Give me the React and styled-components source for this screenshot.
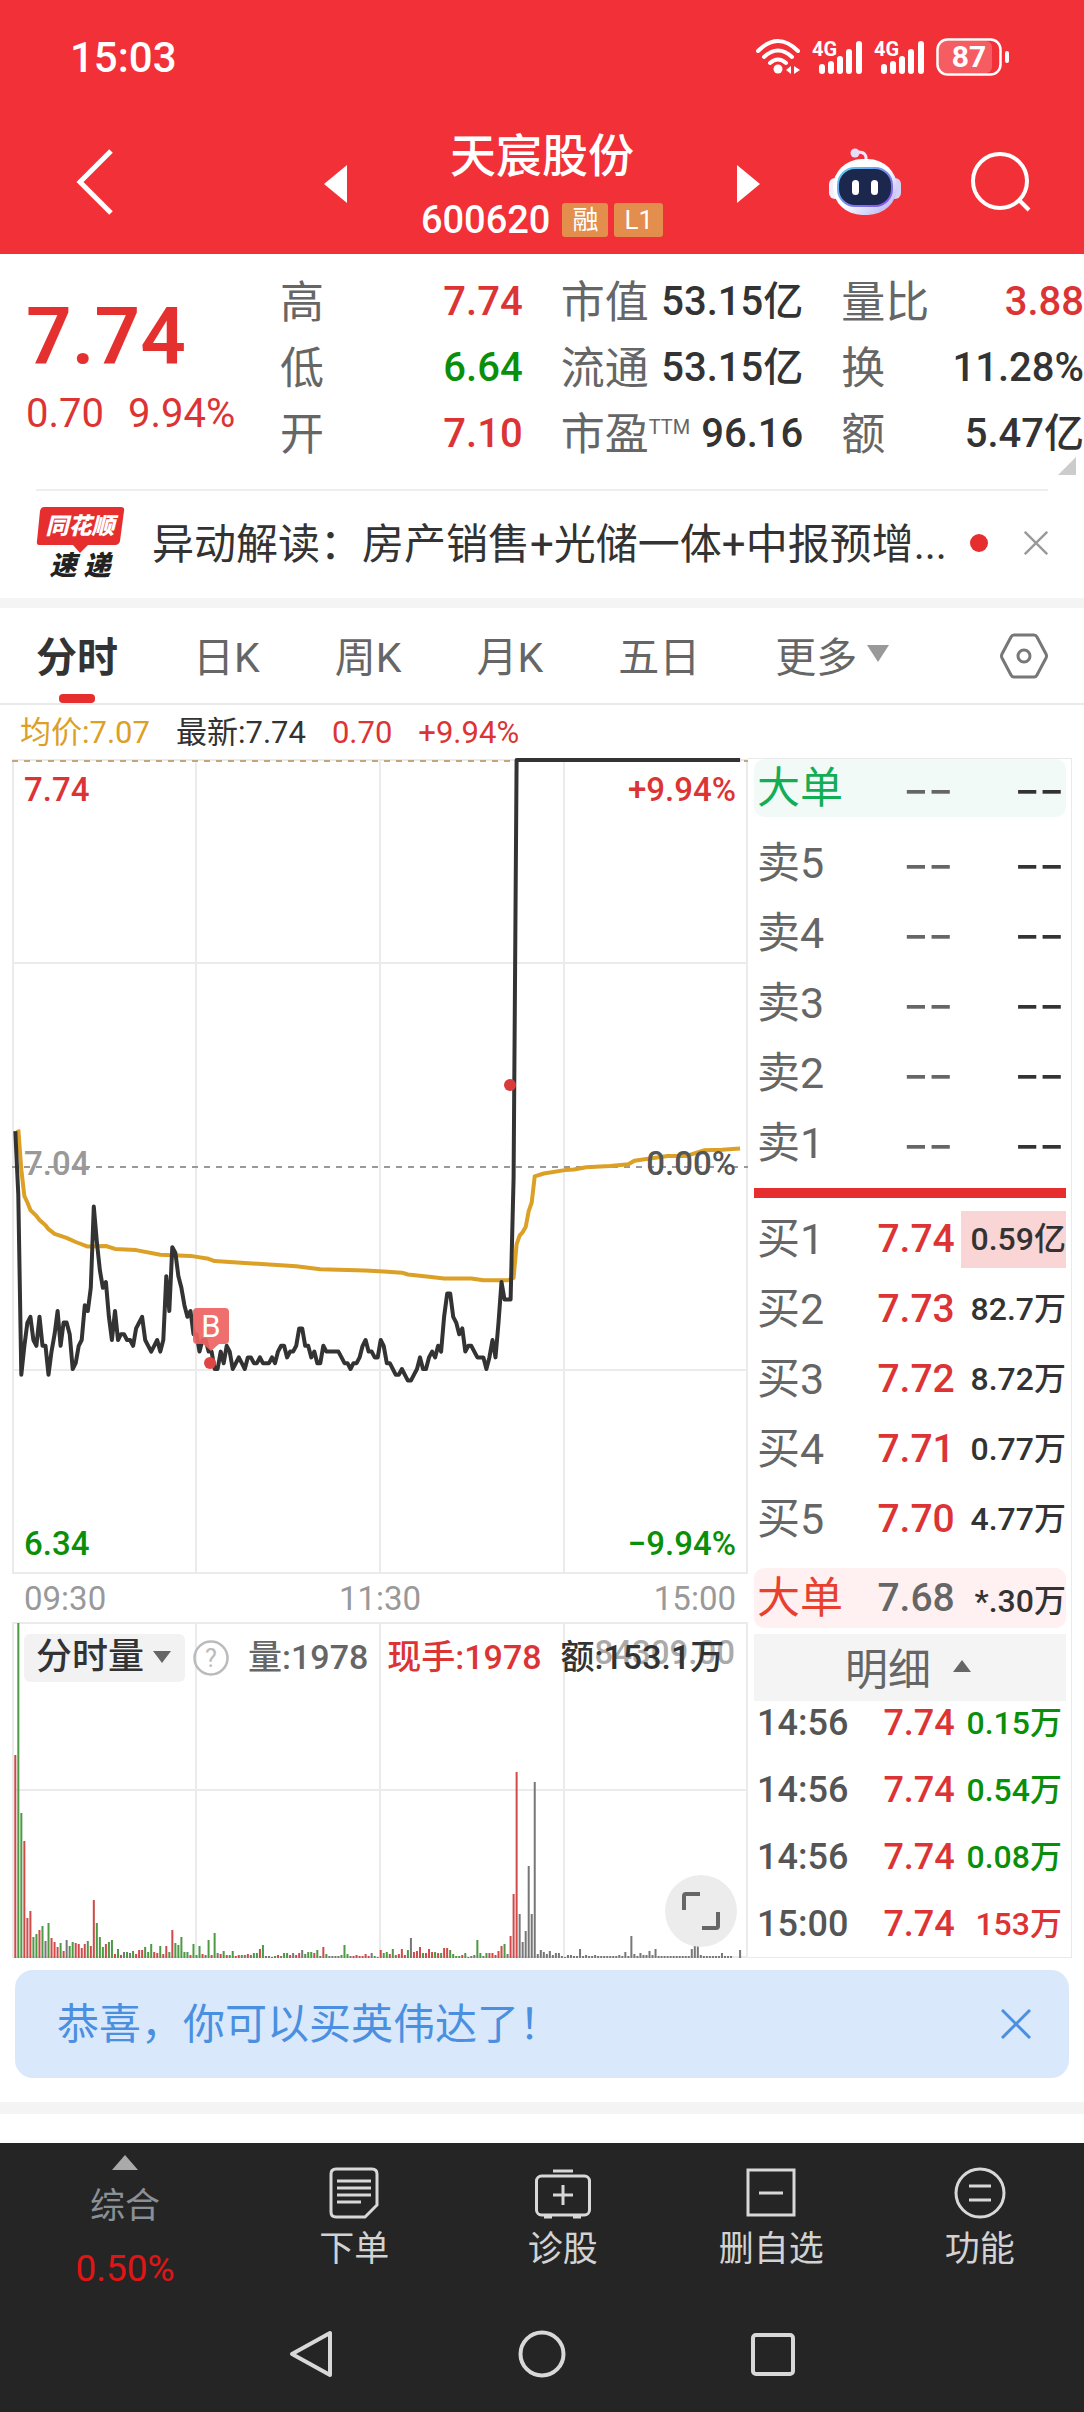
import React, { useState } from "react";
import styled, { createGlobalStyle } from "styled-components";

const GlobalStyle = createGlobalStyle`
  * {
    box-sizing: border-box;
  }
  body {
    margin: 0;
    background: #fff;
    color: #333;
    font-family: Roboto, "Noto Sans CJK SC", sans-serif;
  }
  button {
    display: flex;
    align-items: center;
    justify-content: center;
    padding: 0;
    border: 0;
    background: none;
    color: inherit;
    font: inherit;
    cursor: pointer;
  }
  svg {
    display: block;
    flex: none;
  }
  h1, p, dl, dd {
    margin: 0;
  }
`;

const RED = "#dc3434";
const GREEN = "#0a8f0a";
const colors = { up: RED, down: GREEN, dark: "#333", grey: "#666" };

/* ---------- data ---------- */

const stats = [
    [["高", "7.74", "up"], ["低", "6.64", "down"], ["开", "7.10", "up"]],
    [["市值", "53.15亿", "dark"], ["流通", "53.15亿", "dark"], ["市盈", "96.16", "dark", "TTM"]],
    [["量比", "3.88", "up"], ["换", "11.28%", "dark"], ["额", "5.47亿", "dark"]],
];

const tabs = ["分时", "日K", "周K", "月K", "五日"];

const asks = ["卖5", "卖4", "卖3", "卖2", "卖1"];

const bids = [
    ["买1", "7.74", "0.59亿"],
    ["买2", "7.73", "82.7万"],
    ["买3", "7.72", "8.72万"],
    ["买4", "7.71", "0.77万"],
    ["买5", "7.70", "4.77万"],
];

const ticks = [
    ["14:56", "7.74", "0.15万", "down"],
    ["14:56", "7.74", "0.54万", "down"],
    ["14:56", "7.74", "0.08万", "down"],
    ["15:00", "7.74", "153万", "up"],
];

// price per minute, in cents
const prices = [
    710, 699, 668, 673, 677, 678, 674, 673, 678, 673, 673, 668, 672, 675, 679, 673, 677, 677, 675, 669,
    670, 673, 674, 680, 679, 683, 697, 691, 686, 683, 684, 678, 674, 679, 674, 675, 675, 674, 674, 673,
    676, 677, 678, 674, 673, 672, 673, 674, 672, 674, 685, 679, 690, 689, 685, 683, 680, 678, 679, 675,
    675, 672, 674, 674, 672, 672, 669, 669, 672, 670, 673, 672, 669, 670, 671, 670, 669, 671, 671, 670,
    670, 671, 670, 670, 670, 671, 670, 672, 673, 673, 671, 672, 672, 673, 676, 676, 673, 673, 671, 672,
    670, 670, 673, 672, 672, 672, 672, 672, 671, 670, 670, 669, 670, 670, 671, 673, 674, 672, 672, 671,
    671, 674, 673, 670, 670, 669, 668, 668, 669, 668, 667, 667, 668, 669, 671, 669, 669, 671, 672, 671,
    673, 672, 678, 682, 682, 678, 677, 675, 676, 672, 673, 673, 672, 671, 671, 671, 669, 671, 674, 671,
    677, 684, 681, 681, 681, 702,
    ...Array(75).fill(774),
];

// [minute, average price]
const average = [
    [1, 710.3], [2, 703.4], [3, 698.8], [4, 697.7], [5, 696.4], [7, 695.4], [8, 694.7], [10, 693.8],
    [11, 693.1], [13, 692.3], [17, 691.6], [20, 690.9], [24, 690.1], [30, 690.2], [33, 689.7], [40, 689.5],
    [48, 688.7], [58, 688.5], [64, 688], [66, 687.6], [76, 687.3], [93, 686.7], [101, 686.2], [116, 686],
    [122, 685.8], [128, 685.6], [130, 685.3], [137, 684.9], [142, 684.6], [151, 684.6], [155, 684.3],
    [163, 684.3], [165, 684.7], [166, 690.5], [167, 692], [168, 692.6], [169, 693.5], [170, 696.2],
    [171, 697.7], [172, 702.2], [175, 702.7], [182, 703.3], [185, 703.4], [189, 703.8], [197, 704],
    [203, 704.3], [205, 704.9], [209, 705.2], [216, 705.7], [222, 705.7], [228, 706.7], [234, 706.8],
    [240, 707],
];

// direction letter + bar height, one per minute
const volumes = `
  r203 g335 g145 r117 r40 r47 g21 g24 r28 g32 k17 g35 r20 r16 r11 g15 r7 k18 g12 g16
  r15 r14 r10 r14 g17 r12 r58 g35 g21 g11 r14 g16 g18 r4 g9 r3 k6 g6 k5 g7
  r4 r8 r8 g11 g6 g14 r6 r5 g12 r4 r12 g6 r28 g15 g13 g21 g6 g6 r3 g14
  g3 g12 r4 k3 g18 r3 g25 k5 r4 g7 r3 g3 g7 r2 r3 g3 k3 r4 k3 g5
  g5 r9 g13 k2 k2 r1 g2 r3 k2 g5 g5 r3 k5 r3 r5 k8 g4 g6 g6 r5
  g8 k2 r11 g4 k2 k2 k2 k2 g3 g13 g4 k2 r2 r3 r2 r2 r4 r2 k5 g2
  k1 r8 g5 g6 r4 g9 k3 r4 r9 r3 g8 k20 r6 r7 r11 g5 r5 r9 r6 g6
  r5 g5 r10 r10 g8 g4 g2 g2 r3 g5 r1 k2 k3 g18 g5 k2 g5 r5 r5 r3
  r7 r12 g14 k4 r22 r64 r186 k44 k16 k27 k92 k44 k176 k4 k8 k6 k4 k7 k3 k5
  k5 k2 k1 k3 k3 k2 k2 k9 k2 k3 k2 k2 k3 k2 k2 k2 k2 k2 k2 k2
  k3 k2 k6 k2 k22 k4 k2 k5 k3 k3 k7 k3 k9 k2 k2 k2 k2 k2 k2 k2
  k2 k2 k2 k2 k9 k12 k12 k3 k2 k2 k2 k2 k2 k2 k5 k2 k2 k2 k0 k0 k8
`.trim().split(/\s+/).map((v) => [v[0], Number(v.slice(1))]);

const barColors = { r: "#d04a4a", g: "#4c9a44", k: "#777" };

const xOf = (minute) => 3.3 + minute * 3.02;
const yOf = (cents) => 408 - (cents - 704) * 5.8;
const toPoints = (list) => list.map(([m, c]) => `${xOf(m).toFixed(1)},${yOf(c).toFixed(1)}`).join(" ");

/* ---------- header ---------- */

const Header = styled.header`
  background: #f23037;
  color: #fff;
`;

const StatusBar = styled.div`
  display: flex;
  align-items: center;
  justify-content: space-between;
  height: 114px;
  padding: 0 74px 0 70px;
  font-size: 42px;
  font-weight: 500;
`;

const StatusIcons = styled.div`
  display: flex;
  align-items: center;
  gap: 12px;
`;

const TitleBar = styled.div`
  display: grid;
  grid-template-columns: minmax(0, 1fr) 436px minmax(0, 1fr);
  height: 140px;
`;

const TitleSide = styled.div`
  display: flex;
  align-items: center;
  justify-content: ${(p) => (p.$end ? "flex-end" : "flex-start")};
  gap: 68px;
  padding: ${(p) => (p.$end ? "0 52px 4px 0" : "0 0 4px 75px")};
`;

const TitleCenter = styled.div`
  display: flex;
  align-items: center;
  justify-content: space-between;
`;

const StockName = styled.div`
  align-self: flex-end;
  text-align: center;
  h1 {
    font-size: 46px;
    font-weight: 500;
    line-height: 65px;
  }
`;

const StockCode = styled.div`
  display: flex;
  align-items: center;
  justify-content: center;
  gap: 6px;
  height: 65px;
  padding-bottom: 4px;
  font-size: 38px;
  font-weight: 500;
`;

const Badge = styled.span`
  padding: 0 10px;
  border-radius: 3px;
  background: #e38e4d;
  font-size: 26px;
  font-weight: 400;
  line-height: 34px;
  &:first-of-type {
    margin-left: 6px;
  }
`;

/* ---------- quote ---------- */

const Quote = styled.section`
  position: relative;
  display: grid;
  grid-template-columns: 242px repeat(3, 1fr);
  column-gap: 38px;
  padding: 16px 0 21px;
`;

const Price = styled.div`
  padding: 25px 0 0 26px;
  color: ${RED};
  white-space: nowrap;
`;

const BigPrice = styled.p`
  color: #e53030;
  font-size: 80px;
  font-weight: 600;
  line-height: 84px;
`;

const Change = styled.p`
  display: flex;
  gap: 24px;
  margin-top: 10px;
  font-size: 40px;
  line-height: 50px;
`;

const Stat = styled.div`
  display: flex;
  align-items: center;
  justify-content: space-between;
  height: 66px;
  font-size: 40px;
  line-height: 66px;
  white-space: nowrap;
  dt {
    color: #666;
    font-size: 44px;
  }
  sup {
    font-size: 20px;
    line-height: 20px;
  }
  dd {
    padding-bottom: 2px;
    color: ${(p) => colors[p.$tone]};
    font-weight: 500;
  }
`;

const Corner = styled.span`
  position: absolute;
  right: 8px;
  bottom: 14px;
  border-bottom: 18px solid #ccc;
  border-left: 18px solid transparent;
`;

const News = styled.section`
  display: flex;
  align-items: center;
  height: 109px;
  margin: 0 36px;
  padding-bottom: 3px;
  border-top: 2px solid #eee;
`;

const NewsLink = styled.a`
  flex: 1;
  margin-left: 26px;
  padding-bottom: 6px;
  overflow: hidden;
  color: #333;
  font-size: 42px;
  text-decoration: none;
  white-space: nowrap;
`;

const Dot = styled.span`
  width: 18px;
  height: 18px;
  margin-right: 36px;
  border-radius: 50%;
  background: #e62e2e;
`;

const Band = styled.div`
  height: ${(p) => p.$size}px;
  background: #f4f4f4;
`;

/* ---------- tabs ---------- */

const Tabs = styled.nav`
  display: flex;
  align-items: stretch;
  gap: 75px;
  height: 97px;
  padding: 0 36px 0 36px;
  border-bottom: 2px solid #e9e9e9;
  font-size: 41px;
`;

const Tab = styled.button`
  && {
    position: relative;
    gap: 10px;
    padding-bottom: 4px;
    color: ${(p) => (p.$active ? "#333" : "#666")};
    font-weight: ${(p) => (p.$active ? 700 : 400)};
    white-space: nowrap;
  }
  &::after {
    content: "";
    display: ${(p) => (p.$active ? "block" : "none")};
    position: absolute;
    bottom: 0;
    left: 50%;
    width: 36px;
    height: 9px;
    margin-left: -18px;
    border-radius: 4px;
    background: #e62e2e;
  }
  &:last-child {
    margin-left: auto;
    padding: 0;
  }
`;

const Caret = styled.span`
  border: ${(p) => p.$size}px solid transparent;
  ${(p) => (p.$up ? "border-top-width: 0;" : "border-bottom-width: 0;")}
  ${(p) => (p.$up ? "border-bottom" : "border-top")}: ${(p) => p.$tall || p.$size}px solid ${(p) => p.$color || "#666"};
`;

/* ---------- chart ---------- */

const Legend = styled.div`
  display: flex;
  align-items: baseline;
  gap: 26px;
  height: 53px;
  padding: 0 20px;
  color: ${RED};
  font-size: 31px;
  line-height: 56px;
`;

const Tone = styled.span`
  color: ${(p) => p.$color};
`;

const Market = styled.section`
  display: grid;
  grid-template-columns: 1fr 324px;
  padding: 0 12px;
`;

const Chart = styled.svg`
  width: 100%;
  height: auto;
  font-size: 33px;
  font-weight: 500;
`;

const Times = styled.div`
  display: flex;
  align-items: center;
  justify-content: space-between;
  height: 48px;
  padding: 0 12px;
  color: #999;
  font-size: 33px;
`;

const Volume = styled.div`
  position: relative;
`;

const VolumeBar = styled.div`
  position: absolute;
  top: 12px;
  left: 12px;
  display: flex;
  align-items: center;
  height: 48px;
  font-size: 34px;
  font-weight: 500;
  line-height: 44px;
  white-space: nowrap;
`;

const VolumeSelect = styled.button`
  && {
    gap: 9px;
    height: 48px;
    margin-right: 8px;
    padding: 0 14px 2px 12px;
    border-radius: 6px;
    background: #f2f2f2;
    font-size: 36px;
  }
`;

const VolumeText = styled.span`
  margin-left: 19px;
  padding-bottom: 2px;
  color: ${(p) => p.$color};
`;

const Expand = styled.button`
  && {
    position: absolute;
    right: 11px;
    bottom: 11px;
    width: 72px;
    height: 72px;
    border-radius: 50%;
    background: #ececec;
  }
`;

/* ---------- order book ---------- */

const Book = styled.aside`
  padding: 0 5px 0 6px;
  border: 1px solid #eaeaea;
  border-left: 0;
`;

const Table = styled.table`
  width: 100%;
  margin-top: ${(p) => p.$top || 0}px;
  border-spacing: 0;
  table-layout: fixed;
  th, td {
    height: ${(p) => p.$row}px;
    padding: 0;
    font-weight: 500;
    text-align: right;
    white-space: nowrap;
  }
  th {
    width: 32%;
    padding-left: 3px;
    color: ${(p) => p.$label || "#666"};
    font-size: 43px;
    font-weight: 400;
    line-height: 50px;
    text-align: left;
  }
  td {
    width: 35%;
    font-size: 32px;
  }
  th + td {
    width: 33%;
    padding-right: 2px;
    color: ${(p) => p.$price || RED};
    font-size: 39px;
  }
`;

const BigOrder = styled(Table)`
  border-radius: 10px;
  background: ${(p) => p.$bg};
`;

const TickTable = styled(Table)`
  th, td, th + td {
    height: auto;
    padding-bottom: 23px;
    font-size: 36px;
    line-height: 44px;
  }
  th {
    color: #555;
    font-weight: 500;
  }
  td:last-child {
    padding-right: 4px;
    font-size: 32px;
  }
  tr:last-child > * {
    padding-bottom: 0;
  }
`;

const TickVolume = styled.td`
  color: ${(p) => colors[p.$tone]};
`;

const Filled = styled.span`
  display: block;
  margin-left: 4px;
  background: ${(p) => (p.$on ? "#f9d5d5" : "transparent")};
  line-height: 57px;
`;

const Dash = styled.span`
  display: block;
  padding: 0 2px 16px 0;
  color: ${(p) => colors[p.$tone]};
  font-family: "Noto Sans CJK SC", sans-serif;
  font-size: 74px;
  font-weight: 300;
  line-height: 42px;
`;

const Split = styled.div`
  height: 10px;
  margin: 10px 0 6px;
  background: #e62e2e;
`;

const Detail = styled.button`
  && {
    gap: 22px;
    width: 100%;
    height: 67px;
    margin-top: 6px;
    padding: 0 4px 4px 0;
    background: #f4f4f4;
    color: #666;
    font-size: 43px;
  }
`;

/* ---------- bottom ---------- */

const Notice = styled.section`
  display: flex;
  align-items: center;
  justify-content: space-between;
  height: 108px;
  margin: 12px 15px 24px;
  padding: 0 38px 0 42px;
  border-radius: 18px;
  background: #d9e8fb;
  color: #4a8fe0;
  font-size: 42px;
  p {
    padding-bottom: 8px;
  }
`;

const Footer = styled.footer`
  margin-top: 29px;
  background: #252525;
  color: #d2d2d2;
`;

const Actions = styled.nav`
  display: grid;
  grid-template-columns: 250px repeat(4, 1fr);
  height: 153px;
  font-size: 35px;
`;

const Action = styled.button`
  && {
    flex-direction: column;
    justify-content: flex-start;
    gap: 6px;
    padding-top: 24px;
    line-height: 50px;
  }
`;

const IndexAction = styled(Action)`
  && {
    gap: 12px;
    padding: 12px 0 0;
    color: #8a9096;
  }
  strong {
    color: #e01515;
    font-size: 37px;
    font-weight: 400;
  }
`;

const SystemBar = styled.nav`
  display: grid;
  grid-template-columns: repeat(3, 1fr);
  height: 116px;
  padding: 0 196px;
`;

/* ---------- icons ---------- */

const WifiIcon = () => (
    <svg width="44" height="36" viewBox="0 0 44 36" fill="none" stroke="#fff" strokeWidth="4" strokeLinecap="round">
        <path d="M2 12Q22 -8 42 12M8 18Q22 5 36 18M14 24Q22 17 30 24" />
        <circle cx="22" cy="30" r="4.5" fill="#fff" stroke="none" />
        <path d="M35 27v8l-5-4zM38 27v8l6-4z" fill="#fff" stroke="none" />
    </svg>
);

const SignalIcon = () => (
    <svg width="50" height="36" viewBox="0 0 50 36" stroke="#fff" strokeWidth="6" strokeLinecap="round">
        <text x="0" y="17" fill="#fff" stroke="none" fontSize="20" fontWeight="700">4G</text>
        <path d="M10 28v4M19 25v7M28 20v12M37 13v19M47 5v27" />
    </svg>
);

const BatteryIcon = () => (
    <svg width="74" height="38" viewBox="0 0 74 38">
        <rect x="3" y="3" width="53" height="32" rx="6" fill="#fff" opacity=".22" />
        <rect x="1.5" y="1.5" width="63" height="35" rx="10" fill="none" stroke="#fff" strokeWidth="2.5" />
        <rect x="69" y="13" width="4" height="12" rx="2" fill="#fff" />
        <text x="33" y="29" fill="#fff" fontSize="30" fontWeight="700" textAnchor="middle">87</text>
    </svg>
);

const BackIcon = () => (
    <svg width="40" height="68" viewBox="0 0 40 68" fill="none" stroke="#fff" strokeWidth="5">
        <path d="M36 3L5 34l31 31" />
    </svg>
);

const RobotIcon = () => (
    <svg width="74" height="68" viewBox="0 0 74 68">
        <defs>
            <linearGradient id="shell" x1="0" y1="0" x2="1" y2="1">
                <stop offset=".5" stopColor="#fff" />
                <stop offset="1" stopColor="#a9a6f0" />
            </linearGradient>
            <linearGradient id="rim" x1="0" y1="0" x2="1" y2="1">
                <stop offset="0" stopColor="#5ed0f0" />
                <stop offset="1" stopColor="#8a4be8" />
            </linearGradient>
        </defs>
        <path d="M38 12Q39 4 30 4" fill="none" stroke="#efe6fb" strokeWidth="3" />
        <circle cx="27" cy="5" r="4.5" fill="#e4defa" />
        <rect x="1" y="30" width="12" height="21" rx="6" fill="#f1effd" />
        <rect x="61" y="30" width="12" height="21" rx="6" fill="#d5d2f7" />
        <rect x="5" y="11" width="64" height="56" rx="29" fill="url(#shell)" />
        <rect x="10" y="20" width="54" height="38" rx="17" fill="#1c274d" stroke="url(#rim)" strokeWidth="2" />
        <rect x="24" y="32" width="7" height="15" rx="3.5" fill="#fff" />
        <rect x="43" y="32" width="7" height="15" rx="3.5" fill="#fff" />
    </svg>
);

const SearchIcon = () => (
    <svg width="62" height="62" viewBox="0 0 62 62" fill="none" stroke="#fff" strokeWidth="4">
        <circle cx="30" cy="30" r="27" />
        <path d="M49 49l10 10" />
    </svg>
);

const CrossIcon = ({ size, width = 3 }) => (
    <svg width={size} height={size} viewBox="0 0 30 30" fill="none" stroke="currentColor" strokeWidth={width}>
        <path d="M1 1l28 28M29 1L1 29" />
    </svg>
);

const BrandLogo = () => (
    <svg width="90" height="80" viewBox="0 0 90 80" fontWeight="900" fontStyle="italic" textAnchor="middle">
        <path d="M8 4h77q4 0 3 4l-4 30q-1 4-5 4H52l-8 8-7-8H4q-4 0-3-4L4 8q1-4 4-4z" fill="#e62e2e" />
        <text x="44" y="31" fill="#fff" fontSize="23">同花顺</text>
        <text x="27" y="72" fill="#222" fontSize="27">速</text>
        <text x="61" y="72" fill="#222" fontSize="27">递</text>
    </svg>
);

const HexIcon = () => (
    <svg width="48" height="46" viewBox="0 0 48 46" fill="none" stroke="#777" strokeWidth="3">
        <path d="M14 2h20q2 0 3 2l9 17q1 2 0 4l-9 17q-1 2-3 2H14q-2 0-3-2L2 25q-1-2 0-4l9-17q1-2 3-2z" />
        <circle cx="24" cy="23" r="6" />
    </svg>
);

const HelpIcon = () => (
    <svg width="36" height="36" viewBox="0 0 36 36">
        <circle cx="18" cy="18" r="16.5" fill="none" stroke="#bbb" strokeWidth="2.5" />
        <text x="18" y="27" fill="#bbb" fontSize="25" fontWeight="400" textAnchor="middle">?</text>
    </svg>
);

const ActionIcon = ({ children }) => (
    <svg width="56" height="52" viewBox="0 0 56 52" fill="none" stroke="#d8d8d8" strokeWidth="3">
        {children}
    </svg>
);

/* ---------- page ---------- */

const PriceChart = () => (
    <Chart viewBox="0 0 736 816">
        <path
            d="M1 2V815M184 2V815M368 2V815M552 2V815M735 2V815M0 2H736M0 205H736M0 612H736M0 815H736"
            stroke="#ebebeb"
            strokeWidth="2"
        />
        <path d="M0 3H736" stroke="#c4a67c" strokeWidth="2" strokeDasharray="6 6" />
        <path d="M0 409H736" stroke="#999" strokeWidth="2" strokeDasharray="6 6" />
        <polyline points={toPoints(average)} fill="none" stroke="#dba025" strokeWidth="4" strokeLinejoin="round" />
        <polyline
            points={toPoints(prices.map((c, m) => [m, c]))}
            fill="none"
            stroke="#333"
            strokeWidth="4"
            strokeLinejoin="round"
        />
        <circle cx="498" cy="327" r="6" fill="#d93a3a" />
        <g fill={RED}>
            <text x="12" y="43">7.74</text>
            <text x="724" y="43" textAnchor="end">+9.94%</text>
        </g>
        <text x="12" y="417" fill="#999">7.04</text>
        <text x="724" y="417" fill="#555" textAnchor="end">0.00%</text>
        <g fill={GREEN}>
            <text x="12" y="797">6.34</text>
            <text x="724" y="797" textAnchor="end">−9.94%</text>
        </g>
        <path d="M185 550h28q4 0 4 4v28q0 4-4 4h-6l-8 7-8-7h-6q-4 0-4-4v-28q0-4 4-4z" fill="#ee6262" opacity=".92" />
        <text x="199" y="579" fill="#fff" fontSize="31" fontWeight="400" textAnchor="middle">B</text>
        <circle cx="198" cy="605" r="6" fill="#e04444" />
    </Chart>
);

const VolumeChart = () => (
    <Chart viewBox="0 0 736 336">
        <path
            d="M1 1V335M184 1V335M368 1V335M552 1V335M735 1V335M0 1H736M0 168H736M0 335H736"
            stroke="#ebebeb"
            strokeWidth="2"
        />
        {volumes.map(([dir, h], m) => (
            <rect key={m} x={xOf(m) - 1} y={336 - h} width="2" height={h} fill={barColors[dir]} />
        ))}
        <text x="723" y="42" fill="#aaa" textAnchor="end">84309.00</text>
    </Chart>
);

const OrderBook = () => (
    <Book>
        <BigOrder $row={58} $bg="#f1faf6" $label="#13ad56">
            <tbody>
                <tr>
                    <th scope="row">大单</th>
                    <td><Dash $tone="grey">--</Dash></td>
                    <td><Dash $tone="dark">--</Dash></td>
                </tr>
            </tbody>
        </BigOrder>
        <Table $row={70} $top={11}>
            <tbody>
                {asks.map((label) => (
                    <tr key={label}>
                        <th scope="row">{label}</th>
                        <td><Dash $tone="grey">--</Dash></td>
                        <td><Dash $tone="dark">--</Dash></td>
                    </tr>
                ))}
            </tbody>
        </Table>
        <Split />
        <Table $row={70}>
            <tbody>
                {bids.map(([label, price, volume], i) => (
                    <tr key={label}>
                        <th scope="row">{label}</th>
                        <td>{price}</td>
                        <td><Filled $on={i === 0}>{volume}</Filled></td>
                    </tr>
                ))}
            </tbody>
        </Table>
        <BigOrder $row={60} $top={14} $bg="#fff1f1" $label="#e8402f" $price="#666">
            <tbody>
                <tr>
                    <th scope="row">大单</th>
                    <td>7.68</td>
                    <td>*.30万</td>
                </tr>
            </tbody>
        </BigOrder>
        <Detail>
            明细
            <Caret $up $size={9} $tall={12} />
        </Detail>
        <TickTable>
            <tbody>
                {ticks.map(([time, price, volume, tone], i) => (
                    <tr key={i}>
                        <th scope="row">{time}</th>
                        <td>{price}</td>
                        <TickVolume $tone={tone}>{volume}</TickVolume>
                    </tr>
                ))}
            </tbody>
        </TickTable>
    </Book>
);

const App = () => {
    const [active, setActive] = useState("分时");

    return <div lang="zh-CN">
        <GlobalStyle />
        <Header>
            <StatusBar>
                <span>15:03</span>
                <StatusIcons>
                    <WifiIcon />
                    <SignalIcon />
                    <SignalIcon />
                    <BatteryIcon />
                </StatusIcons>
            </StatusBar>
            <TitleBar>
                <TitleSide>
                    <button aria-label="返回"><BackIcon /></button>
                </TitleSide>
                <TitleCenter>
                    <button aria-label="上一只">
                        <svg width="23" height="38" viewBox="0 0 23 38" fill="#fff"><path d="M23 0v38L0 19z" /></svg>
                    </button>
                    <StockName>
                        <h1>天宸股份</h1>
                        <StockCode>
                            600620
                            <Badge>融</Badge>
                            <Badge>L1</Badge>
                        </StockCode>
                    </StockName>
                    <button aria-label="下一只">
                        <svg width="23" height="38" viewBox="0 0 23 38" fill="#fff"><path d="M0 0v38l23-19z" /></svg>
                    </button>
                </TitleCenter>
                <TitleSide $end>
                    <button aria-label="助手"><RobotIcon /></button>
                    <button aria-label="搜索"><SearchIcon /></button>
                </TitleSide>
            </TitleBar>
        </Header>

        <Quote>
            <Price>
                <BigPrice>7.74</BigPrice>
                <Change>
                    <span>0.70</span>
                    <span>9.94%</span>
                </Change>
            </Price>
            {stats.map((column, i) => (
                <dl key={i}>
                    {column.map(([label, value, tone, sup]) => (
                        <Stat key={label} $tone={tone}>
                            <dt>{label}{sup && <sup>{sup}</sup>}</dt>
                            <dd>{value}</dd>
                        </Stat>
                    ))}
                </dl>
            ))}
            <Corner />
        </Quote>

        <News>
            <BrandLogo />
            <NewsLink href="#news">异动解读：房产销售+光储一体+中报预增...</NewsLink>
            <Dot />
            <Tone as="button" $color="#999" aria-label="关闭"><CrossIcon size={24} /></Tone>
        </News>
        <Band $size={10} />

        <Tabs>
            {tabs.map((tab) => (
                <Tab key={tab} $active={tab === active} onClick={() => setActive(tab)}>{tab}</Tab>
            ))}
            <Tab>更多<Caret $size={11} $tall={17} $color="#999" /></Tab>
            <Tab aria-label="设置"><HexIcon /></Tab>
        </Tabs>

        <Legend>
            <Tone $color="#dba025">均价:7.07</Tone>
            <Tone $color="#333">最新:7.74</Tone>
            <span>0.70</span>
            <span>+9.94%</span>
        </Legend>

        <Market>
            <div>
                <PriceChart />
                <Times>
                    <span>09:30</span>
                    <span>11:30</span>
                    <span>15:00</span>
                </Times>
                <Volume>
                    <VolumeChart />
                    <VolumeBar>
                        <VolumeSelect>分时量<Caret $size={9} $tall={12} /></VolumeSelect>
                        <HelpIcon />
                        <VolumeText $color="#666">量:1978</VolumeText>
                        <VolumeText $color={RED}>现手:1978</VolumeText>
                        <VolumeText $color="#333">额:153.1万</VolumeText>
                    </VolumeBar>
                    <Expand aria-label="全屏">
                        <svg width="38" height="38" viewBox="0 0 38 38" fill="none" stroke="#666" strokeWidth="4">
                            <path d="M2 18V4q0-2 2-2h14M20 36h14q2 0 2-2V20" />
                        </svg>
                    </Expand>
                </Volume>
            </div>
            <OrderBook />
        </Market>

        <Notice>
            <p>恭喜，你可以买英伟达了！</p>
            <button aria-label="关闭"><CrossIcon size={30} /></button>
        </Notice>
        <Band $size={12} />

        <Footer>
            <Actions>
                <IndexAction>
                    <Caret $up $size={13} $tall={15} $color="#aaa" />
                    <span>综合</span>
                    <strong>0.50%</strong>
                </IndexAction>
                <Action>
                    <ActionIcon>
                        <path d="M10 2h36q5 0 5 5v31L39 50H10q-5 0-5-5V7q0-5 5-5z" />
                        <path d="M11 14h34M11 21h34M11 28h34M11 35h24" />
                    </ActionIcon>
                    下单
                </Action>
                <Action>
                    <ActionIcon>
                        <rect x="1.5" y="9" width="53" height="39" rx="5" />
                        <path d="M18 4h20M28 18v20M18 28h20M9 50h8M38 50h8" />
                    </ActionIcon>
                    诊股
                </Action>
                <Action>
                    <ActionIcon>
                        <path d="M5 3h46v45H5zM16 26h24" />
                    </ActionIcon>
                    删自选
                </Action>
                <Action>
                    <ActionIcon>
                        <circle cx="28" cy="26" r="24" />
                        <path d="M17 19h22M17 33h22" />
                    </ActionIcon>
                    功能
                </Action>
            </Actions>
            <SystemBar>
                <button aria-label="后退">
                    <svg width="48" height="48" viewBox="0 0 48 48" fill="none" stroke="#d8d8d8" strokeWidth="4" strokeLinejoin="round">
                        <path d="M43 3v42L5 24z" />
                    </svg>
                </button>
                <button aria-label="主页">
                    <svg width="48" height="48" viewBox="0 0 48 48" fill="none" stroke="#d8d8d8" strokeWidth="4">
                        <circle cx="24" cy="24" r="21.5" />
                    </svg>
                </button>
                <button aria-label="最近任务">
                    <svg width="48" height="48" viewBox="0 0 48 48" fill="none" stroke="#d8d8d8" strokeWidth="4">
                        <rect x="4" y="5" width="40" height="39" rx="3" />
                    </svg>
                </button>
            </SystemBar>
        </Footer>
    </div>
};

export default App;
